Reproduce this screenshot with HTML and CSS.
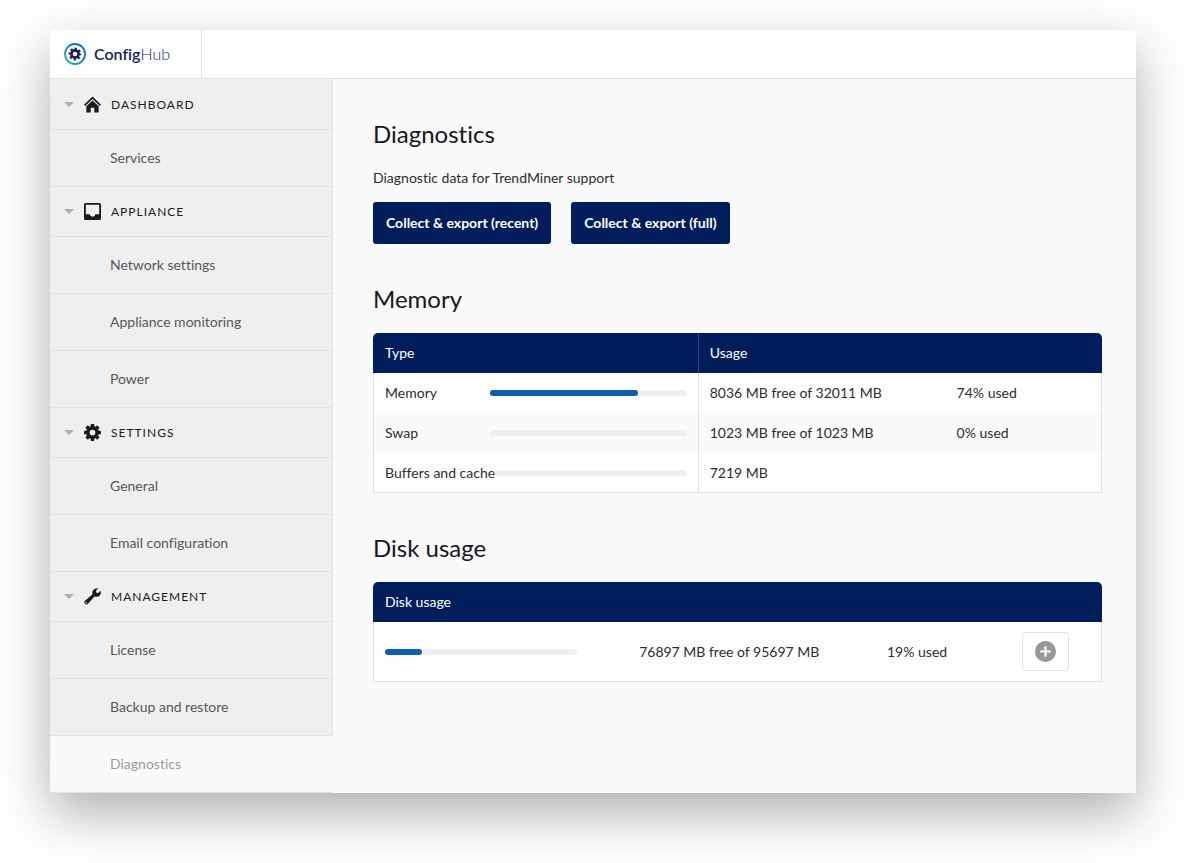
FILE: index.html
```
<!DOCTYPE html>
<html lang="en">
<head>
    <meta charset="utf-8">
    <title>ConfigHub - Diagnostics</title>
    <link rel="stylesheet" href="styles.css">
</head>
<body>
    <div class="window">
        <header class="topbar">
            <a class="logo" href="#">
                <svg class="logo-mark" viewBox="0 0 22 22" aria-hidden="true">
                    <defs>
                        <linearGradient id="ring" x1="0" y1="1" x2="1" y2="0">
                            <stop offset="0" stop-color="#12b4e8"/>
                            <stop offset="1" stop-color="#1560a8"/>
                        </linearGradient>
                    </defs>
                    <circle cx="11" cy="11" r="10" fill="#fff" stroke="url(#ring)" stroke-width="1.8"/>
                    <circle cx="11" cy="11" r="3.6" fill="none" stroke="#1b1c5e" stroke-width="2.6"/>
                    <circle cx="11" cy="11" r="5.4" fill="none" stroke="#1b1c5e" stroke-width="2" stroke-dasharray="2.3 1.94" stroke-dashoffset="1.15"/>
                </svg>
                <span class="logo-text">Config<span class="logo-light">Hub</span></span>
            </a>
        </header>

        <div class="layout">
            <nav class="sidebar">
                <button class="group" type="button">
                    <span class="caret"></span>
                    <svg class="icon" viewBox="0 0 16 16" aria-hidden="true">
                        <path d="M8 .5 16 8.200l-1.100 1.200L8 2.900 1.100 9.400 0 8.200z"/>
                        <path d="M8 4.200 13.800 9.700V15.500H9.700V11H6.300V15.500H2.200V9.700z"/>
                    </svg>
                    Dashboard
                </button>
                <a class="item" href="#">Services</a>

                <button class="group" type="button">
                    <span class="caret"></span>
                    <svg class="icon" viewBox="0 0 16 16" aria-hidden="true">
                        <path fill-rule="evenodd" d="M1.500 0h13A1.500 1.500 0 0 1 16 1.500v13a1.500 1.500 0 0 1-1.500 1.500h-13A1.500 1.500 0 0 1 0 14.500v-13A1.500 1.500 0 0 1 1.500 0zM1.700 1.700v9H5.200a2.900 2.900 0 0 0 5.600 0h3.500v-9z"/>
                    </svg>
                    Appliance
                </button>
                <a class="item" href="#">Network settings</a>
                <a class="item" href="#">Appliance monitoring</a>
                <a class="item" href="#">Power</a>

                <button class="group" type="button">
                    <span class="caret"></span>
                    <svg class="icon" viewBox="0 0 16 16" aria-hidden="true">
                        <circle cx="8" cy="8" r="4.4" fill="none" stroke="#1a1c21" stroke-width="3.4"/>
                        <g>
                            <rect x="6.300" y="0" width="3.400" height="3.600" rx=".8"/>
                            <rect x="6.300" y="12.400" width="3.400" height="3.600" rx=".8"/>
                            <rect x="0" y="6.300" width="3.600" height="3.400" rx=".8"/>
                            <rect x="12.400" y="6.300" width="3.600" height="3.400" rx=".8"/>
                        </g>
                        <g transform="rotate(45 8 8)">
                            <rect x="6.300" y="0" width="3.400" height="3.600" rx=".8"/>
                            <rect x="6.300" y="12.400" width="3.400" height="3.600" rx=".8"/>
                            <rect x="0" y="6.300" width="3.600" height="3.400" rx=".8"/>
                            <rect x="12.400" y="6.300" width="3.600" height="3.400" rx=".8"/>
                        </g>
                    </svg>
                    Settings
                </button>
                <a class="item" href="#">General</a>
                <a class="item" href="#">Email configuration</a>

                <button class="group" type="button">
                    <span class="caret"></span>
                    <svg class="icon" viewBox="0 0 16 16" aria-hidden="true">
                        <path fill-rule="evenodd" d="M13.300.400 11.300 2.600 11.600 4.400 13.400 4.700 15.600 2.700C16.400 5 15.300 7.600 12.800 8.200 11.800 8.400 10.800 8.300 10 7.900L3.500 15A2 2 0 0 1 .7 12.200L8 5.900C7.200 3 9.200-.2 13.300.400zM2.100 13.100a.7.700 0 1 0 0 1.400.7.700 0 0 0 0-1.400z"/>
                    </svg>
                    Management
                </button>
                <a class="item" href="#">License</a>
                <a class="item" href="#">Backup and restore</a>
                <a class="item active" href="#">Diagnostics</a>
            </nav>

            <main class="content">
                <section>
                    <h1>Diagnostics</h1>
                    <p class="intro">Diagnostic data for TrendMiner support</p>
                    <div class="actions">
                        <button class="btn" type="button">Collect &amp; export (recent)</button>
                        <button class="btn" type="button">Collect &amp; export (full)</button>
                    </div>
                </section>

                <section>
                    <h2>Memory</h2>
                    <table class="memory">
                        <colgroup>
                            <col class="col-name">
                            <col class="col-bar">
                            <col class="col-usage">
                            <col>
                        </colgroup>
                        <thead>
                            <tr>
                                <th colspan="2">Type</th>
                                <th colspan="2" class="divided">Usage</th>
                            </tr>
                        </thead>
                        <tbody>
                            <tr>
                                <td><span class="name">Memory</span></td>
                                <td class="bar-cell"><div class="bar"><div class="fill" style="width: 75%"></div></div></td>
                                <td class="divided">8036 MB free of 32011 MB</td>
                                <td>74% used</td>
                            </tr>
                            <tr>
                                <td><span class="name">Swap</span></td>
                                <td class="bar-cell"><div class="bar"></div></td>
                                <td class="divided">1023 MB free of 1023 MB</td>
                                <td>0% used</td>
                            </tr>
                            <tr>
                                <td><span class="name">Buffers and cache</span></td>
                                <td class="bar-cell"><div class="bar"></div></td>
                                <td class="divided">7219 MB</td>
                                <td></td>
                            </tr>
                        </tbody>
                    </table>
                </section>

                <section>
                    <h2>Disk usage</h2>
                    <table class="disk">
                        <colgroup>
                            <col class="col-disk-bar">
                            <col class="col-disk-usage">
                            <col>
                            <col class="col-action">
                        </colgroup>
                        <thead>
                            <tr>
                                <th colspan="4">Disk usage</th>
                            </tr>
                        </thead>
                        <tbody>
                            <tr>
                                <td><div class="bar"><div class="fill" style="width: 19.5%"></div></div></td>
                                <td>76897 MB free of 95697 MB</td>
                                <td>19% used</td>
                                <td>
                                    <button class="btn-icon" type="button" aria-label="Expand disk">
                                        <svg viewBox="0 0 20 20" aria-hidden="true">
                                            <circle cx="10" cy="10" r="10" fill="#979797"/>
                                            <path d="M10 5v10M5 10h10" stroke="#fff" stroke-width="2"/>
                                        </svg>
                                    </button>
                                </td>
                            </tr>
                        </tbody>
                    </table>
                </section>
            </main>
        </div>
    </div>
</body>
</html>
```
FILE: styles.css
```
* {
    box-sizing: border-box;
}

body {
    margin: 0;
    padding: 30px 50px 70px;
    background: #fff;
    color: #2b2d31;
    font-family: Lato, "Liberation Sans", sans-serif;
    font-size: 14px;
    line-height: 20px;
    font-variant-ligatures: none;
}

button {
    font: inherit;
    cursor: pointer;
}

a {
    color: inherit;
    text-decoration: none;
}

.window {
    background: #fafafa;
    box-shadow: 0 20px 50px rgba(0, 0, 0, 0.32);
}

/* top bar */
.topbar {
    display: flex;
    background: #fff;
    border-bottom: 1px solid #e2e2e2;
}

.logo {
    display: flex;
    align-items: center;
    gap: 8px;
    width: 152px;
    height: 48px;
    padding-left: 14px;
    border-right: 1px solid #e2e2e2;
}

.logo-mark {
    width: 22px;
    height: 22px;
}

.logo-text {
    color: #1b1c5e;
    font-size: 16px;
    font-weight: 600;
}

.logo-light {
    font-weight: 300;
}

/* sidebar */
.layout {
    display: flex;
}

.sidebar {
    flex: 0 0 283px;
    border-top: 1px solid #efefef;
}

.group,
.item {
    display: flex;
    align-items: center;
    width: 100%;
    background: #efefef;
    border: 0;
    border-right: 1px solid #e2e2e2;
    border-bottom: 1px solid #e2e2e2;
}

.group {
    height: 50px;
    padding: 0 0 0 14px;
    color: #1a1c21;
    font-size: 12px;
    letter-spacing: 1px;
    text-transform: uppercase;
}

.caret {
    margin-right: 10px;
    border: 5px solid transparent;
    border-top-color: #b0b0b0;
    border-bottom: 0;
}

.icon {
    width: 17px;
    height: 17px;
    margin-right: 10px;
    fill: #1a1c21;
}

.item {
    height: 57px;
    padding-left: 60px;
    color: #55575b;
}

.item.active {
    background: #fafafa;
    border-right-color: #fafafa;
    color: #9b9b9b;
}

/* content */
.content {
    flex: 1;
    padding: 39px 34px 40px 40px;
}

section {
    margin-bottom: 39px;
}

h1,
h2 {
    margin: 0 0 18px;
    color: #16181d;
    font-size: 24px;
    font-weight: 400;
    line-height: 32px;
}

.intro {
    margin: 0 0 14px;
}

.actions {
    display: flex;
    gap: 20px;
}

.btn {
    height: 42px;
    padding: 0 13px;
    background: #001e5c;
    border: 0;
    border-radius: 3px;
    color: #fff;
    font-weight: 700;
}

/* tables */
table {
    width: 100%;
    table-layout: fixed;
    border-collapse: separate;
    border-spacing: 0;
}

th {
    height: 40px;
    padding: 0 12px;
    background: #001e5c;
    color: #fff;
    font-weight: 400;
    text-align: left;
}

th:first-child {
    border-top-left-radius: 5px;
}

th:last-child {
    border-top-right-radius: 5px;
}

tbody tr {
    background: #fff;
}

tbody tr:nth-child(even) {
    background: #fafafa;
}

td {
    height: 40px;
    padding: 0 11px;
    background: inherit;
    white-space: nowrap;
}

td:first-child {
    border-left: 1px solid #e0e0e0;
}

td:last-child {
    border-right: 1px solid #e0e0e0;
}

tr:last-child td {
    border-bottom: 1px solid #e0e0e0;
}

.divided {
    padding-left: 11px;
    border-left: 1px solid #e0e0e0;
}

th.divided {
    border-left-color: #33497c;
}

/* long names run over the start of the bar */
.name {
    background: inherit;
}

.col-name {
    width: 117px;
}

.col-bar {
    width: 28.500%;
}

.col-usage {
    width: 34%;
}

.bar-cell {
    padding-left: 0;
    background: none;
}

.bar {
    height: 6px;
    border-radius: 3px;
    background: #efefef;
}

.fill {
    height: 6px;
    border-radius: 3px;
    background: #0a5db8;
}

.disk td {
    height: 60px;
}

.disk .bar {
    margin-right: 40px;
}

.col-disk-bar {
    width: 35%;
}

.col-disk-usage {
    width: 34%;
}

.col-action {
    width: 91px;
}

.btn-icon {
    display: flex;
    align-items: center;
    justify-content: center;
    width: 47px;
    height: 39px;
    padding: 0;
    background: #fff;
    border: 1px solid #e2e2e2;
    border-radius: 4px;
}

.btn-icon svg {
    width: 21px;
    height: 21px;
}
```
